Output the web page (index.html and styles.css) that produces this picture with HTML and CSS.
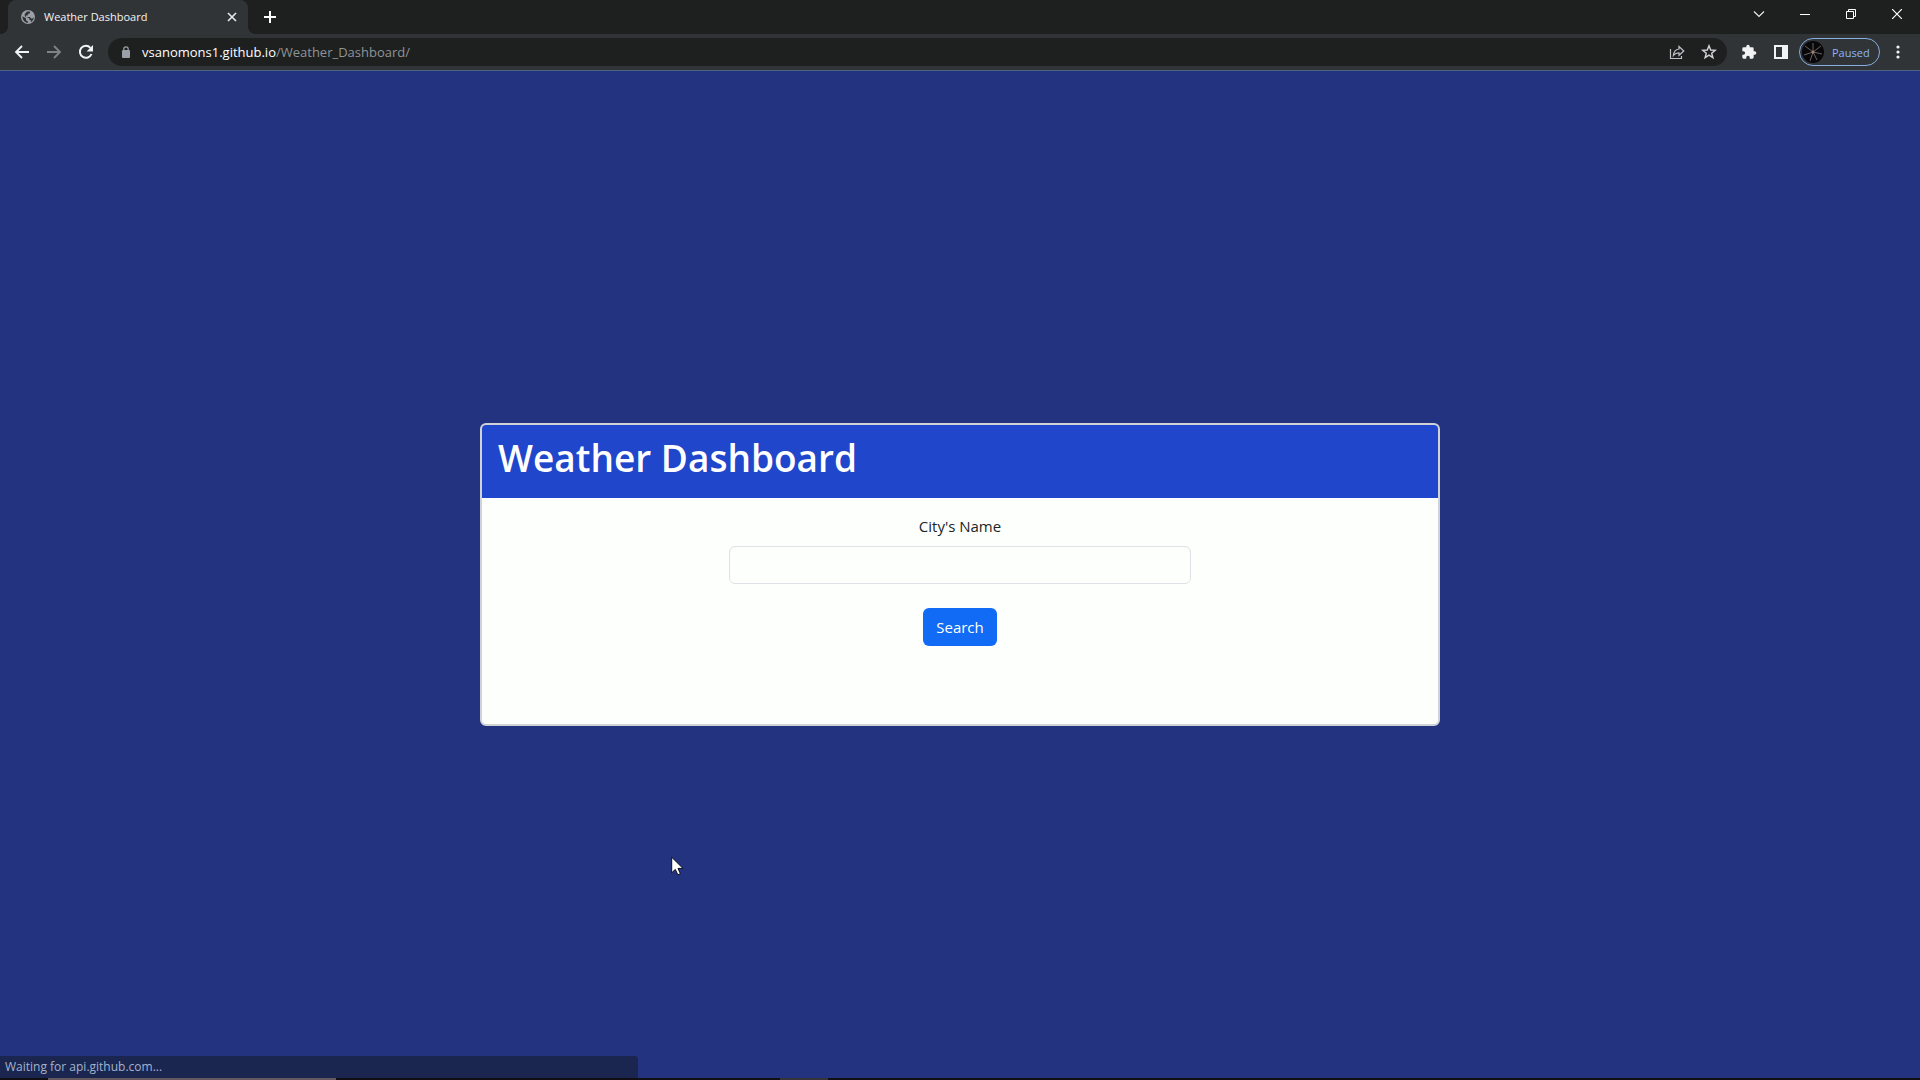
FILE: index.html
```html
<!DOCTYPE html>
<html lang="en">
<head>
<meta charset="utf-8">
<title>Weather Dashboard</title>
<link rel="stylesheet" href="styles.css">
</head>
<body>
<header class="browser">
  <div class="tabstrip">
    <div class="tab">
      <svg class="favicon" width="14" height="14" viewBox="0 0 14 14"><circle cx="7" cy="7" r="7" fill="#9aa0a6"/><path d="M1.4 6.2 5 8.2v2l2 1.2v1.4C4 12.800 1.400 10 1.400 6.200zM6 1.600 9 1.600 8.800 3.400 6.800 4v1.500H5v1.600h4l1 1.500h1.600L12.800 7c0 2.500-1.300 4.300-3 5.200V10.200L8.200 9.500V8.200L4 6.600 3.600 4.200z" fill="#2f3335"/></svg>
      <span class="tab-title">Weather Dashboard</span>
      <button class="tab-button" aria-label="Close tab"><svg width="10" height="10" viewBox="0 0 10 10"><path d="M1 1 9 9M9 1 1 9" stroke="#e8eaed" stroke-width="1.600"/></svg></button>
    </div>
    <button class="new-tab" aria-label="New tab"><svg width="12" height="12" viewBox="0 0 12 12"><path d="M6 0v12M0 6h12" stroke="#fff" stroke-width="2"/></svg></button>
    <div class="window-controls">
      <button aria-label="Search tabs"><svg width="12" height="12" viewBox="0 0 12 12"><path d="M1 3.500 6 8.500 11 3.500" fill="none" stroke="#e8eaed" stroke-width="1.200"/></svg></button>
      <button aria-label="Minimize"><svg width="10" height="10" viewBox="0 0 10 10"><path d="M0 5.500h10" stroke="#fff"/></svg></button>
      <button aria-label="Restore"><svg width="10" height="10" viewBox="0 0 10 10"><path d="M.5 2.500h7v7h-7zM2.500 2.500v-2h7v7h-2" fill="none" stroke="#fff"/></svg></button>
      <button aria-label="Close"><svg width="10" height="10" viewBox="0 0 10 10"><path d="M0 0 10 10M10 0 0 10" stroke="#fff" stroke-width="1.200"/></svg></button>
    </div>
  </div>
  <div class="toolbar">
    <div class="nav">
      <button aria-label="Back"><svg width="16" height="16" viewBox="0 0 16 16"><path d="M15 8H2M8 2 2 8l6 6" fill="none" stroke="#f1f3f4" stroke-width="1.800"/></svg></button>
      <button aria-label="Forward"><svg width="16" height="16" viewBox="0 0 16 16"><path d="M1 8h13M8 2l6 6-6 6" fill="none" stroke="#7f8487" stroke-width="1.800"/></svg></button>
      <button aria-label="Reload"><svg width="16" height="16" viewBox="0 0 16 16"><path d="M13.500 10A6 6 0 1 1 12.400 3.800" fill="none" stroke="#f1f3f4" stroke-width="2"/><path d="M15 1v6.400H8.600z" fill="#f1f3f4"/></svg></button>
    </div>
    <div class="omnibox">
      <svg width="10" height="12" viewBox="0 0 10 12"><rect x="1" y="4" width="8" height="8" rx="1" fill="#9aa0a6"/><path d="M2.800 4.500V3a2.200 2.200 0 0 1 4.400 0v1.500" fill="none" stroke="#9aa0a6" stroke-width="1.200"/></svg>
      <a class="url" href="#"><span class="host">vsanomons1.github.io</span>/Weather_Dashboard/</a>
      <button aria-label="Share"><svg width="16" height="16" viewBox="0 0 16 16"><path d="M1.500 5v9.500h11V12" fill="none" stroke="#bdc1c6" stroke-width="1.200"/><path d="M10 2.500 14.800 7 10 11.300V8.800C7.500 8.800 5.700 9.600 4.400 11.300 4.800 8 6.500 5.500 10 5z" fill="none" stroke="#bdc1c6" stroke-width="1.200"/></svg></button>
      <button aria-label="Bookmark"><svg width="16" height="16" viewBox="0 0 16 16"><path d="M8 1.700 9.700 6l4.600.3-3.600 2.900 1.200 4.500L8 11.200 4.100 13.700l1.200-4.500L1.700 6.300 6.300 6z" fill="none" stroke="#d2d5d8" stroke-width="1.400"/></svg></button>
    </div>
    <div class="actions">
      <button aria-label="Extensions"><svg width="16" height="16" viewBox="0 0 24 24"><path d="M20.500 11H19V7a2 2 0 0 0-2-2h-4V3.500a2.500 2.500 0 0 0-5 0V5H4a2 2 0 0 0-2 2v3.800h1.500a2.700 2.700 0 0 1 0 5.400H2V20a2 2 0 0 0 2 2h3.800v-1.500a2.700 2.700 0 0 1 5.400 0V22H17a2 2 0 0 0 2-2v-4h1.500a2.500 2.500 0 0 0 0-5z" fill="#f1f3f4"/></svg></button>
      <button aria-label="Side panel"><svg width="14" height="14" viewBox="0 0 14 14"><path d="M0 0h14v14H0zM2 2v10h6V2z" fill="#f1f3f4" fill-rule="evenodd"/></svg></button>
      <button class="profile">
        <svg width="22" height="22" viewBox="0 0 22 22"><circle cx="11" cy="11" r="11" fill="#08080b"/><path d="M11 11 3 5M11 11l8-6M11 11l9 2M11 11l-9 3M11 11l-3 9M11 11l4 8M11 11V2" stroke="#6b605e" stroke-width="1"/><circle cx="11" cy="11" r="1.500" fill="#a58570"/></svg>
        <span>Paused</span>
      </button>
      <button class="more" aria-label="Menu"><svg width="4" height="14" viewBox="0 0 4 14"><circle cx="2" cy="2" r="1.600" fill="#f1f3f4"/><circle cx="2" cy="7" r="1.600" fill="#f1f3f4"/><circle cx="2" cy="12" r="1.600" fill="#f1f3f4"/></svg></button>
    </div>
  </div>
</header>
<main class="page">
  <section class="card">
    <h1 class="card-header">Weather Dashboard</h1>
    <form class="card-body">
      <label for="city">City's Name</label>
      <input id="city" type="text">
      <button class="search" type="button">Search</button>
    </form>
  </section>
  <div class="status">Waiting for api.github.com...</div>
  <svg class="cursor" width="13" height="20" viewBox="0 0 13 20"><path d="M.7 1.200v15.600l3.600-3.400 2.500 5.400 2.600-1.100-2.400-5.300H12z" fill="#fff" stroke="#080d20"/></svg>
</main>
<footer class="taskbar"><span class="running"></span><span class="active"></span></footer>
</body>
</html>
```
FILE: styles.css
```css
* {
  box-sizing: border-box;
}

body {
  margin: 0;
  min-height: 100vh;
  display: flex;
  flex-direction: column;
  background: #24337f;
  font-family: "Open Sans", "Noto Sans", sans-serif;
}

svg {
  display: block;
  flex: none;
}

button {
  display: flex;
  align-items: center;
  justify-content: center;
  margin: 0;
  padding: 0;
  border: 0;
  background: none;
  font: inherit;
}

.tabstrip {
  display: flex;
  height: 34px;
  padding-left: 8px;
  background: #1d201f;
}

.tab {
  position: relative;
  display: flex;
  align-items: center;
  width: 240px;
  padding: 0 8px 0 13px;
  border-radius: 8px 8px 0 0;
  background: #313437;
  color: #f1f3f4;
  font-size: 11px;
}

.tab::before,
.tab::after {
  content: "";
  position: absolute;
  bottom: 0;
  width: 8px;
  height: 8px;
}

.tab::before {
  right: 100%;
  background: radial-gradient(circle at 0 0, #1d201f 8px, #313437 8px);
}

.tab::after {
  left: 100%;
  background: radial-gradient(circle at 100% 0, #1d201f 8px, #313437 8px);
}

.tab-title {
  flex: 1;
  margin-left: 9px;
  padding-bottom: 2px;
}

.tab-button {
  width: 16px;
  height: 16px;
}

.new-tab {
  width: 28px;
  margin-left: 8px;
}

.window-controls {
  display: flex;
  height: 28px;
  margin-left: auto;
}

.window-controls button {
  width: 46px;
}

.toolbar {
  display: flex;
  align-items: center;
  height: 37px;
  border-bottom: 1px solid #4c6384;
  background: #313437;
}

.nav {
  display: flex;
  padding: 0 6px;
}

.nav button {
  width: 32px;
  height: 28px;
}

.omnibox {
  display: flex;
  flex: 1;
  align-items: center;
  height: 28px;
  padding: 0 2px 0 13px;
  border-radius: 14px;
  background: #1d201f;
}

.omnibox button,
.actions button {
  width: 32px;
  height: 28px;
}

.url {
  flex: 1;
  margin-left: 11px;
  color: #8f9498;
  font-size: 13px;
  text-decoration: none;
}

.host {
  color: #fff;
}

.actions {
  display: flex;
  align-items: center;
  padding: 0 6px;
}

.actions .profile {
  justify-content: flex-start;
  gap: 8px;
  width: 81px;
  margin: 0 2px;
  padding-left: 2px;
  border: 1px solid #86aee0;
  border-radius: 14px;
  color: #8ab4f8;
  font-size: 11px;
}

.page {
  position: relative;
  display: flex;
  flex: 1;
  align-items: center;
  justify-content: center;
}

.card {
  width: 50%;
  border: 2px solid #d0d3d6;
  border-radius: 6px;
  overflow: hidden;
  background: #fdfffd;
}

.card-header {
  margin: 0;
  padding: 9px 16px 16px;
  background: #2046cc;
  color: #fff;
  font-size: 37px;
  font-weight: 600;
  line-height: 48px;
}

.card-body {
  display: flex;
  flex-direction: column;
  align-items: center;
  padding: 16px 16px 78px;
  color: #212529;
  font-size: 15px;
  line-height: 24px;
}

.card-body input {
  width: 50%;
  height: 38px;
  margin: 8px 0 24px;
  padding: 6px 12px;
  border: 1px solid #dee2e6;
  border-radius: 6px;
  background: transparent;
  font: inherit;
}

.search {
  height: 38px;
  padding: 0 13px;
  border-radius: 6px;
  background: #126bf5;
  color: #fff;
}

.status {
  position: absolute;
  bottom: 0;
  left: 0;
  width: 638px;
  padding: 0 5px;
  border-radius: 0 3px 0 0;
  background: #1a2650;
  color: #a5b4cd;
  font-size: 12px;
  line-height: 22px;
}

.cursor {
  position: absolute;
  top: 785px;
  left: 671px;
}

.taskbar {
  display: flex;
  height: 2px;
  padding-left: 48px;
  background: #110f14;
}

.running {
  width: 288px;
  background: #62585e;
}

.active {
  width: 48px;
  margin-left: 444px;
  background: #34343a;
}
```
